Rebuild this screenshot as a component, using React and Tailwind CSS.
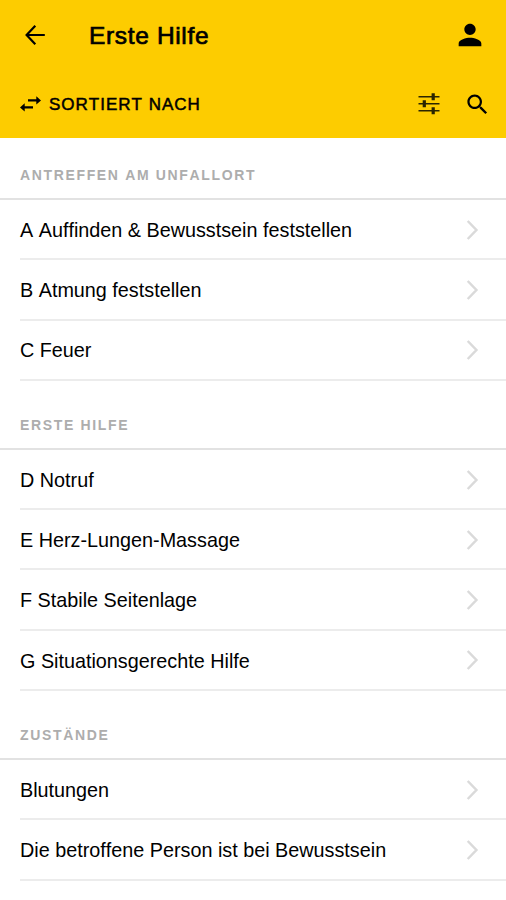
import React from 'react';

const sections = [
  {
    title: 'ANTREFFEN AM UNFALLORT',
    titleStyle: 'h-[62px] pt-[13px]',
    items: [
      { label: 'A Auffinden & Bewusstsein feststellen' },
      { label: 'B Atmung feststellen' },
      { label: 'C Feuer' },
    ],
  },
  {
    title: 'ERSTE HILFE',
    titleStyle: 'h-[69px] pt-[21px]',
    items: [
      { label: 'D Notruf' },
      { label: 'E Herz-Lungen-Massage' },
      { label: 'F Stabile Seitenlage' },
      { label: 'G Situationsgerechte Hilfe' },
    ],
  },
  {
    title: 'ZUSTÄNDE',
    titleStyle: 'h-[69px] pt-[20px]',
    items: [
      { label: 'Blutungen' },
      { label: 'Die betroffene Person ist bei Bewusstsein' },
    ],
  },
];

const BackIcon = () => (
  <svg width="22" height="22" viewBox="0 0 22 22" fill="none" stroke="currentColor" strokeWidth="2.2">
    <path d="M20.8 11H2.8M11.3 1.8L2.6 11l8.700 9.200" />
  </svg>
);

const PersonIcon = () => (
  <svg width="34" height="34" viewBox="0 0 24 24" fill="currentColor">
    <path d="M12 12c2.21 0 4-1.79 4-4s-1.79-4-4-4-4 1.79-4 4 1.79 4 4 4zm0 2c-2.67 0-8 1.34-8 4v2h16v-2c0-2.66-5.33-4-8-4z" />
  </svg>
);

const SwapIcon = () => (
  <svg width="22" height="16" viewBox="0 0 22 16" fill="currentColor">
    <path d="M8 3.300h8.300V.2l4.700 4.200-4.700 4.200V5.500H8zM13 10.200H4.700V7.300L0 11.400l4.700 4.200V12.500H13z" />
  </svg>
);

const TuneIcon = () => (
  <svg width="22" height="22" viewBox="0 0 22 22" fill="none" stroke="currentColor">
    <path d="M.5 3.800h21M.5 10.800h21M.5 17.800h21" strokeWidth="1.6" />
    <path d="M15.200.300v7M6.300 7.300v7M15.200 14.300v7" strokeWidth="3.2" />
  </svg>
);

const SearchIcon = () => (
  <svg width="27" height="27" viewBox="0 0 24 24" fill="currentColor">
    <path d="M15.500 14h-.790l-.280-.270C15.410 12.590 16 11.110 16 9.500 16 5.910 13.090 3 9.500 3S3 5.910 3 9.500 5.910 16 9.500 16c1.610 0 3.090-.590 4.230-1.570l.270.280v.790l5 4.990L20.490 19l-4.990-5zm-6 0C7.010 14 5 11.990 5 9.500S7.010 5 9.500 5 14 7.010 14 9.500 11.990 14 9.500 14z" />
  </svg>
);

const ChevronIcon = () => (
  <svg width="14" height="22" viewBox="0 0 14 22" fill="none" stroke="currentColor" strokeWidth="2.5">
    <path d="M1.700 2l8.700 9-8.700 9" />
  </svg>
);

function Header() {
  return (
    <header className="h-[138px] bg-[#fdcc00]">
      {/* Title bar */}
      <div className="flex h-[70px] items-center pl-6 pr-[19px]">
        <button aria-label="Zurück"><BackIcon /></button>
        <h1 className="ml-[43px] mt-[2px] flex-1 text-[24.500px] leading-none tracking-[0.65px] [-webkit-text-stroke:0.7px_black]">
          Erste Hilfe
        </h1>
        <button aria-label="Profil"><PersonIcon /></button>
      </div>
      {/* Sort and filter */}
      <div className="flex h-[68px] items-center pl-5 pr-[15px]">
        <button className="flex flex-1 items-center gap-[7px]">
          <SwapIcon />
          <span className="text-[17px] leading-none tracking-[1px] [-webkit-text-stroke:0.5px_black]">
            SORTIERT NACH
          </span>
        </button>
        <button aria-label="Filter" className="mr-[24px] text-[#2b2500]"><TuneIcon /></button>
        <button aria-label="Suche"><SearchIcon /></button>
      </div>
    </header>
  );
}

export default function App() {
  return (
    <div className="h-[900px] w-[506px] overflow-hidden bg-white font-['Liberation_Sans',Arial,sans-serif] text-black [font-kerning:none]">
      <Header />
      <main>
        {sections.map((section) => (
          <section key={section.title}>
            <h2 className={`flex items-center border-b-2 border-[#e2e2e2] pl-5 text-[14px] font-bold leading-none tracking-[1.65px] text-[#adadad] ${section.titleStyle}`}>
              {section.title}
            </h2>
            <ul className="pl-5">
              {section.items.map((item) => (
                <li key={item.label} className="flex h-[60.300px] items-center justify-between border-b-2 border-[#ececec] pr-[26px] pt-px">
                  <span className="pt-[2px] text-[19.800px] leading-none">{item.label}</span>
                  <span className="text-[#dadada]"><ChevronIcon /></span>
                </li>
              ))}
            </ul>
          </section>
        ))}
      </main>
    </div>
  );
}
